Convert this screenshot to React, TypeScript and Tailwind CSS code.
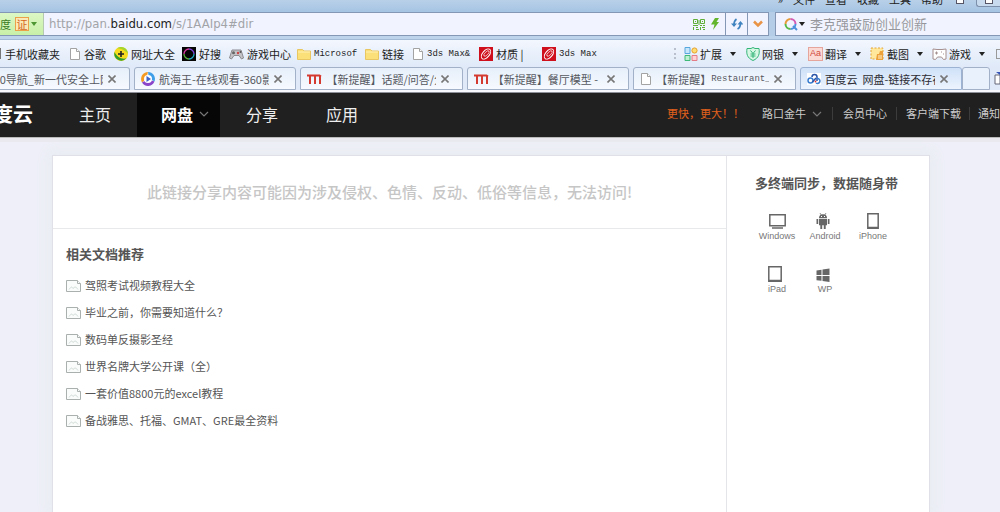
import React from "react";

const cjk = "font-['Noto_Sans_CJK_SC',sans-serif]";

function Caret({ className = "text-[#222]" }: { className?: string }) {
  return (
    <svg viewBox="0 0 6 4" className={`h-[4px] w-[6px] shrink-0 ${className}`} aria-hidden="true">
      <path d="M0 0h6L3 4z" fill="currentColor" />
    </svg>
  );
}

function Chevron({ className = "" }: { className?: string }) {
  return (
    <svg viewBox="0 0 10 6" className={`h-[6px] w-[10px] shrink-0 ${className}`} fill="none" stroke="#777" strokeWidth="1.200" aria-hidden="true">
      <path d="M1 1l4 4 4-4" />
    </svg>
  );
}

function PageIcon() {
  return (
    <svg viewBox="0 0 12 14" className="h-[14px] w-[12px] shrink-0" fill="#fff" stroke="#a3a3a3" aria-hidden="true">
      <path d="M1.5 1.500h6l3 3v8h-9z" />
      <path d="M7.500 1.500v3h3" />
    </svg>
  );
}

function FolderIcon() {
  return (
    <svg viewBox="0 0 14 14" className="size-[14px] shrink-0" aria-hidden="true">
      <path d="M.5 2.500h5l1.500 1.500h6.500v8.500H.5z" fill="#fbdf78" stroke="#e8c661" />
      <path d="M1 5h12" stroke="#fff1b5" />
    </svg>
  );
}

function PlusIcon() {
  return (
    <svg viewBox="0 0 14 14" className="size-[14px] shrink-0" aria-hidden="true">
      <circle cx="7" cy="7" r="7" fill="#f7dc1e" />
      <path d="M.5 5A7 7 0 0 0 12.500 11.300C8 12.800 3 10 .5 5z" fill="#2f9e2f" />
      <path d="M3 1.300A7 7 0 0 1 14 7C11 3 7 1.500 3 1.300z" fill="#a4d52c" />
      <path d="M7 4v6M4 7h6" stroke="#222" strokeWidth="1.600" />
    </svg>
  );
}

function RingIcon() {
  return (
    <svg viewBox="0 0 14 14" className="size-[14px] shrink-0" fill="none" strokeWidth="1.300" aria-hidden="true">
      <path fill="#050505" d="M0 0h14v14H0z" />
      <path d="M2 7a5 5 0 0 1 5-5" stroke="#d53a9d" />
      <path d="M7 2a5 5 0 0 1 5 5" stroke="#7c42d5" />
      <path d="M12 7a5 5 0 0 1-5 5" stroke="#20a9c2" />
      <path d="M7 12a5 5 0 0 1-5-5" stroke="#57b63b" />
    </svg>
  );
}

function PadIcon() {
  return (
    <svg viewBox="0 0 15 12" className="h-[12px] w-[15px] shrink-0" aria-hidden="true">
      <path d="M3 2h9l2.500 8-2 1-2.500-3.500H5L2.500 11l-2-1z" fill="#c3c3c7" stroke="#8b8b90" />
      <circle cx="4.500" cy="4.800" r="1.500" fill="#666" />
      <circle cx="9" cy="5" r="1.200" fill="#c44" />
      <circle cx="11.500" cy="4" r="1" fill="#555" />
    </svg>
  );
}

function RedIcon() {
  return (
    <svg viewBox="0 0 14 14" className="size-[14px] shrink-0" fill="none" stroke="#fff" aria-hidden="true">
      <path fill="#cf0f1c" stroke="none" d="M0 0h14v14H0z" />
      <ellipse cx="7" cy="7" rx="6" ry="3.400" transform="rotate(-50 7 7)" strokeWidth="1" />
      <ellipse cx="7.500" cy="6.500" rx="3.500" ry="1.500" transform="rotate(-45 7.500 6.500)" strokeWidth=".7" />
    </svg>
  );
}

function ExtIcon() {
  return (
    <svg viewBox="0 0 14 14" className="size-[14px] shrink-0" aria-hidden="true">
      <path d="M1 .5h5v6H1z" fill="#c7e6fb" stroke="#56a7dc" />
      <circle cx="10.500" cy="3.500" r="2.600" fill="#ffdd75" stroke="#e5a12c" />
      <path d="M1 8.500h5v5H1z" fill="#bdf0d0" stroke="#3fb978" />
      <path d="M8 8.500h5v5H8z" fill="#ffd1d4" stroke="#e37c86" />
    </svg>
  );
}

function ShieldIcon() {
  return (
    <svg viewBox="0 0 14 14" className="size-[14px] shrink-0" fill="none" stroke="#34b578" aria-hidden="true">
      <path d="M7 .5l2 1h4c.8 5 0 9.500-6 12C1 11 .2 6.500 1 1.500h4z" fill="#d6f7e4" />
      <path d="M4.500 3.500L7 6.500l2.500-3M7 6.500V11M4.500 7h5M4.500 9h5" />
    </svg>
  );
}

function TranslateIcon() {
  return (
    <span className="flex h-[14px] w-[15px] shrink-0 items-center justify-center border border-[#e5a59d] bg-[#fbd9d4] font-['Liberation_Sans',sans-serif] text-[9px] leading-none text-[#d04a3c]">
      Aa
    </span>
  );
}

function CropIcon() {
  return (
    <svg viewBox="0 0 15 14" className="h-[14px] w-[15px] shrink-0" aria-hidden="true">
      <path d="M1 1h12v11H1z" fill="#ffe79b" stroke="#e2a63a" strokeDasharray="2 1.500" />
      <path d="M6 13l1-6h2l1-3h3v9z" fill="#eda13b" />
      <path d="M9 8v4M11 8v4" stroke="#fff0c8" />
    </svg>
  );
}

function GameIcon() {
  return (
    <svg viewBox="0 0 15 14" className="h-[14px] w-[15px] shrink-0" fill="#fff" stroke="#a58f8f" aria-hidden="true">
      <path d="M1 2l4 .5h5l4-.5v10l-2.500.5-2-2.500h-4l-2 2.500L1 12z" />
      <path d="M3 6h3M4.500 4.500v3M9 5h1M11 7h1" />
    </svg>
  );
}

function PlayIcon() {
  return (
    <svg viewBox="0 0 14 14" className="size-[14px] shrink-0" aria-hidden="true">
      <path d="M7 0A7 7 0 0 0 1 10.500L5 7z" fill="#f59a22" />
      <path d="M7 0a7 7 0 0 1 6.500 9.500L8 6z" fill="#3e9ee8" />
      <path d="M1 10.500A7 7 0 0 0 13.500 9.500L7 7z" fill="#8b45ca" />
      <circle cx="7" cy="7" r="4" fill="#fff" />
      <path d="M5.500 4v6l4.500-3z" fill="#3e65c8" />
    </svg>
  );
}

function MIcon() {
  return (
    <svg viewBox="0 0 15 10" className="h-[10px] w-[15px] shrink-0" fill="none" stroke="#d43a30" strokeWidth="2" aria-hidden="true">
      <path d="M0 1.500h12.500l1.500 1M3 1v9M8 1v9M13 2v8" />
    </svg>
  );
}

function CloudIcon() {
  return (
    <svg viewBox="0 0 14 12" className="h-[12px] w-[14px] shrink-0" fill="none" strokeWidth="1.500" aria-hidden="true">
      <path fill="#fff" d="M0 0h14v12H0z" />
      <circle cx="3.500" cy="7.500" r="2.500" stroke="#3b7ed0" />
      <path d="M5.500 9L9 5" stroke="#2c56a8" />
      <path d="M5 4a2.500 2.500 0 0 1 5 0v4" stroke="#2c56a8" />
      <path d="M10 5.500a2.500 2.500 0 1 1-1 4.500" stroke="#3b7ed0" />
      <circle cx="8.500" cy="8.500" r=".9" fill="#d33" />
    </svg>
  );
}

function Mono({ children }: { children: React.ReactNode }) {
  return <span className="font-['Liberation_Mono',monospace] text-[9px] leading-[14px]">{children}</span>;
}

const bookmarks: { label: string; mono?: boolean; icon: React.ReactNode; width: string }[] = [
  { label: "谷歌", icon: <PageIcon />, width: "w-[45px]" },
  { label: "网址大全", icon: <PlusIcon />, width: "w-[68px]" },
  { label: "好搜", icon: <RingIcon />, width: "w-[47px]" },
  { label: "游戏中心", icon: <PadIcon />, width: "w-[68px]" },
  { label: "Microsof", mono: true, icon: <FolderIcon />, width: "w-[68px]" },
  { label: "链接", icon: <FolderIcon />, width: "w-[47px]" },
  { label: "3ds Max&", mono: true, icon: <PageIcon />, width: "w-[67px]" },
  { label: "材质 |", icon: <RedIcon />, width: "w-[63px]" },
  { label: "3ds Max", mono: true, icon: <RedIcon />, width: "w-[68px]" },
];

const tools = [
  { label: "扩展", icon: <ExtIcon /> },
  { label: "网银", icon: <ShieldIcon /> },
  { label: "翻译", icon: <TranslateIcon /> },
  { label: "截图", icon: <CropIcon /> },
  { label: "游戏", icon: <GameIcon /> },
];

function CloseX() {
  return (
    <button aria-label="关闭标签" className="ml-[5px] mr-[13px] shrink-0">
      <svg viewBox="0 0 8 8" className="size-[8px]" stroke="#777" strokeWidth="1.600" aria-hidden="true">
        <path d="M.5.5l7 7M7.500.5l-7 7" />
      </svg>
    </button>
  );
}

function Tab({ icon, children, active }: { icon: React.ReactNode; children: React.ReactNode; active?: boolean }) {
  return (
    <div
      className={`flex min-w-0 flex-1 items-center rounded-t-[3px] border pl-[6px] ${
        active
          ? "border-[#9db3d3] bg-linear-to-b from-[#cfe1f8] to-[#edf4fe] text-[#2d2d35]"
          : "border-[#a3b1c8] bg-linear-to-b from-[#e6effa] to-[#f7faff] text-[#55585f]"
      }`}
    >
      {icon}
      <a href="#tab" className="ml-1 flex min-w-0 flex-1 items-center overflow-hidden whitespace-pre">
        {children}
      </a>
      <CloseX />
    </div>
  );
}

function BrowserChrome() {
  return (
    <header className={`${cjk} text-[11px] leading-[14px] text-[#222]`}>
      <div className="flex h-3 justify-end overflow-hidden bg-linear-to-b from-[#b9d0e9] to-[#a5c4e3]">
        <nav className="-mt-2 flex gap-[10px] whitespace-nowrap pr-[13px]">
          <span>»</span>
          <a href="#file">文件</a>
          <a href="#view">查看</a>
          <a href="#fav">收藏</a>
          <a href="#tools">工具</a>
          <a href="#help">帮助</a>
        </nav>
        <span className="mr-3 h-1 w-2 border border-t-0 border-[#556] bg-white" />
        <span className="flex h-[7px] w-6 justify-center rounded-bl-[3px] border-b border-l border-[#7c8fab] bg-[#c8daee]">
          <span className="h-1 w-2 border border-t-0 border-[#556] bg-white" />
        </span>
      </div>

      <div className="flex h-6 bg-[#b6cde8]">
        <div className="flex min-w-0 flex-1 border-y border-r border-[#8498b5] bg-[#f1f4fe]">
          <button className="flex w-11 shrink-0 items-center border-r border-[#b4c9b0] bg-linear-to-b from-[#dcf7c4] to-[#c8f0a8] text-[#3b7d25]">
            <span>度</span>
            <span className="ml-1 flex size-[14px] items-center justify-center border border-[#eaa14a] bg-[#fce9b8] text-[#d2661c]">证</span>
            <Caret className="ml-[2px] text-[#4d9632]" />
          </button>
          <div
            role="textbox"
            aria-label="地址"
            contentEditable
            suppressContentEditableWarning
            className="flex-1 self-center whitespace-nowrap pl-[5px] font-['DejaVu_Sans_Condensed','Open_Sans',sans-serif] text-[13px] leading-[18px] text-[#a2a3a8]"
          >
            http://pan.<span className="text-[#222]">baidu.com</span>/s/1AAIp4#dir
          </div>
          <button aria-label="二维码" className="mr-[6px]">
            <svg viewBox="0 0 12 11" className="h-[11px] w-[12px]" fill="none" stroke="#5fae37" aria-hidden="true">
              <path d="M.5.5h4v4h-4zM7.500.5h4v4h-4zM2 2.500h1M9 2.500h1M0 6.500h5M7 6.500h2M10 6.500h2M.5 8v3M3 8.500h2M3 10.500h3M7.500 8v3M9 8.500h3M10 10.500h2M6 1v5" />
            </svg>
          </button>
          <button aria-label="极速模式" className="mr-[6px]">
            <svg viewBox="0 0 8 12" className="h-[12px] w-[8px]" fill="#63b52e" aria-hidden="true">
              <path d="M4 0h4L5.500 4H8L2 12l1.500-5.500H0z" />
            </svg>
          </button>
          <button aria-label="刷新" className="flex w-[22px] items-center justify-center border-l border-[#8498b5]">
            <svg viewBox="0 0 12 12" className="size-[12px]" fill="none" stroke="#3f83c0" strokeWidth="1.800" aria-hidden="true">
              <path d="M5.500 1C4 2 3 3 3 7M6.500 11c2-1 3-2 3-6" />
              <path d="M0 5.500h6L3 9zM6.500 6.500h6L9.500 3z" fill="#3f83c0" stroke="none" />
            </svg>
          </button>
          <button aria-label="展开" className="flex w-[21px] items-center justify-center border-l border-[#8498b5]">
            <svg viewBox="0 0 10 8" className="h-[8px] w-[10px]" fill="none" stroke="#e99346" strokeWidth="2.500" aria-hidden="true">
              <path d="M1 1.500l4 4 4-4" />
            </svg>
          </button>
        </div>
        <div className="ml-[6px] flex w-[225px] shrink-0 items-center border-y border-l border-[#8498b5] bg-[#f1f4fe] pl-2">
          <svg viewBox="0 0 14 14" className="size-[14px] shrink-0" fill="none" strokeWidth="2" aria-hidden="true">
            <path d="M1.500 7A5 5 0 0 1 6.500 2" stroke="#e59b3a" />
            <path d="M6.500 2a5 5 0 0 1 5 5" stroke="#d35ab5" />
            <path d="M11.500 7a5 5 0 0 1-5 5" stroke="#4d8fdc" />
            <path d="M6.500 12a5 5 0 0 1-5-5" stroke="#56b948" />
            <path d="M9 9l4 4" stroke="#4d8fdc" />
          </svg>
          <Caret className="ml-px mr-[5px]" />
          <input
            aria-label="搜索"
            placeholder="李克强鼓励创业创新"
            className="min-w-0 flex-1 bg-transparent text-[13px] leading-[18px] outline-none placeholder:text-[#96979c]"
          />
        </div>
      </div>

      <div className="h-1 border-b border-[#a3bad7] bg-[#bdd3eb]" />

      <div className="flex h-[27px] items-center overflow-hidden whitespace-nowrap bg-linear-to-b from-[#f3f7fe] to-[#dfe9f8]">
        <div className="flex w-[69px] shrink-0 items-center gap-1">
          <span className="h-[11px] w-px bg-[#777]" />
          <a href="#m">手机收藏夹</a>
        </div>
        {bookmarks.map((b, i) => (
          <a key={i} href="#bookmark" className={`flex shrink-0 items-center gap-[3px] ${b.width}`}>
            {b.icon}
            {b.mono ? <Mono>{b.label}</Mono> : b.label}
          </a>
        ))}
        <div className="ml-auto flex shrink-0 items-center">
          <span className="mr-2 h-[11px] border-l-2 border-dotted border-[#b9bfcc]" />
          {tools.map((t) => (
            <button key={t.label} className="flex w-[62px] items-center gap-[2px]">
              {t.icon}
              {t.label}
              <Caret className="ml-[6px]" />
            </button>
          ))}
          <span className="ml-[2px] h-[10px] w-1 border border-r-0 border-[#999]" />
        </div>
      </div>

      <div className="flex h-[23px] gap-1 bg-[#dfe9f8]">
        <div className="flex w-[130px] shrink-0 items-center rounded-tr-[3px] border border-l-0 border-[#a3b1c8] bg-linear-to-b from-[#e6effa] to-[#f7faff] text-[#55585f]">
          <a href="#tab" className="flex w-[103px] justify-end overflow-hidden whitespace-nowrap">
            <span className="-mr-2">360导航_新一代安全上网</span>
          </a>
          <CloseX />
        </div>
        <Tab icon={<PlayIcon />}>航海王-在线观看-360影视</Tab>
        <Tab icon={<MIcon />}>【新提醒】话题/问答/分</Tab>
        <Tab icon={<MIcon />}>【新提醒】餐厅模型 -</Tab>
        <Tab icon={<PageIcon />}>
          【新提醒】<Mono>Restaurant_</Mono>
        </Tab>
        <Tab icon={<CloudIcon />} active>
          {"百度云  网盘-链接不存在"}
        </Tab>
        <button aria-label="新标签" className="-ml-1 w-7 shrink-0 rounded-t-[3px] border border-[#a3b1c8] bg-[#e9f1fc]" />
        <svg viewBox="0 0 6 14" className="mt-1 h-[14px] w-[6px] shrink-0" aria-hidden="true">
          <path d="M1 4h5v9H1z" fill="#fff" stroke="#667" />
          <path d="M2 1h4v3z" fill="#3554b5" />
        </svg>
      </div>
      <div className="h-[3px] border-b border-[#8d9099] bg-[#f6f8fc]" />
    </header>
  );
}

function SiteNav() {
  return (
    <nav className={`${cjk} flex h-11 items-center whitespace-nowrap bg-[#202020] pb-[3px] text-[16px] text-[#eee]`}>
      <div className="flex w-[137px] shrink-0 items-center overflow-hidden">
        <a href="#home" className="flex w-[33px] shrink-0 justify-end overflow-hidden text-[20px] font-bold leading-[26px] text-white">
          百度云
        </a>
        <a href="#index" className="ml-[46px]">主页</a>
      </div>
      <a href="#disk" className="-mb-[3px] flex w-[83px] shrink-0 items-center self-stretch bg-[#060606] pb-[3px] pl-6 font-bold text-white">
        网盘
        <Chevron className="ml-[6px]" />
      </a>
      <a href="#share" className="ml-[26px]">分享</a>
      <a href="#app" className="ml-12">应用</a>
      <div className="ml-auto flex shrink-0 items-center text-[11px] text-[#ccc]">
        <a href="#faster" className="mr-[18px] text-[#e0601c]">更快，更大！！</a>
        <a href="#user" className="flex items-center">
          路口金牛
          <Chevron className="ml-[6px]" />
        </a>
        <span className="mx-[10px] h-[13px] w-px bg-[#3c3c3c]" />
        <a href="#vip">会员中心</a>
        <span className="mx-[9px] h-[13px] w-px bg-[#3c3c3c]" />
        <a href="#client">客户端下载</a>
        <span className="mx-2 h-[13px] w-px bg-[#3c3c3c]" />
        <a href="#notice">通知</a>
      </div>
    </nav>
  );
}

const docs = [
  "驾照考试视频教程大全",
  "毕业之前，你需要知道什么？",
  "数码单反摄影圣经",
  "世界名牌大学公开课（全）",
  "一套价值8800元的excel教程",
  "备战雅思、托福、GMAT、GRE最全资料",
];

function DocIcon() {
  return (
    <svg viewBox="0 0 15 12" className="h-[12px] w-[15px] shrink-0" fill="#fafcfb" stroke="#a9b0ad" aria-hidden="true">
      <path d="M.5.5h11l3 3v8H.5z" />
      <path d="M11.500.5v3h3" />
      <path d="M3 9.500c2-3 3-3 4-1 2-2 3-2 5 1" stroke="#cfdbd5" fill="none" />
    </svg>
  );
}

const devices = [
  {
    label: "Windows",
    icon: (
      <svg viewBox="0 0 17 16" className="h-[16px] w-[17px]" fill="none" stroke="#666" strokeWidth="1.500" aria-hidden="true">
        <path d="M.8 1.800h15.400v11H.8z" />
        <path d="M3 15h11" />
      </svg>
    ),
  },
  {
    label: "Android",
    icon: (
      <svg viewBox="0 0 14 16" className="mr-1 h-[16px] w-[14px]" fill="#666" aria-hidden="true">
        <path d="M3 5a4 3.800 0 0 1 8 0zM3 5.800h8v6.500H3zM.5 6h1.700v5H.5zM11.800 6h1.700v5h-1.700zM4.300 12h1.900v4H4.300zM7.800 12h1.900v4H7.800z" />
        <path d="M4 0l1.200 2M10 0L8.800 2" stroke="#666" strokeWidth=".7" />
        <path d="M5 3h1v1H5zM8 3h1v1H8z" fill="#fff" />
      </svg>
    ),
  },
  {
    label: "iPhone",
    icon: (
      <svg viewBox="0 0 12 16" className="h-[16px] w-[12px]" fill="none" stroke="#666" strokeWidth="1.500" aria-hidden="true">
        <path d="M.8.8h10.400v14.400H.8z" />
        <path d="M1 14.500h10" />
      </svg>
    ),
  },
  {
    label: "iPad",
    icon: (
      <svg viewBox="0 0 14 16" className="mr-1 h-[16px] w-[14px]" fill="none" stroke="#666" strokeWidth="1.500" aria-hidden="true">
        <path d="M.8.8h12.400v14.400H.8z" />
        <path d="M1 14.500h12" />
      </svg>
    ),
  },
  {
    label: "WP",
    icon: (
      <svg viewBox="0 0 14 16" className="mr-1 h-[16px] w-[14px]" fill="#666" aria-hidden="true">
        <path d="M.5 4.500l5-.8V9h-5zM6.500 3.500L13.500 2.500V9h-7zM.5 10h5v4.800l-5-.6zM6.500 10h7v6l-7-1z" />
      </svg>
    ),
  },
];

export default function App() {
  return (
    <div className="flex min-h-screen flex-col overflow-hidden bg-[#eeeff8]">
      <BrowserChrome />
      <SiteNav />
      <div className="h-[5px] shrink-0 border-t border-[#bbb] bg-[#e9e9ef]" />
      <main
        className={`${cjk} ml-[52px] mr-[70px] mt-[13px] flex flex-1 border border-b-0 border-[#e0e1e8] bg-white text-[#555] shadow-[0_0_12px_4px_#e9edf1]`}
      >
        <section className="min-w-0 flex-1 border-r border-[#e4e5e8]">
          <h1 className="flex h-[73px] items-center justify-center border-b border-[#e8e9eb] text-[15px] font-medium text-[#c6c6c6]">
            <span className="whitespace-nowrap">此链接分享内容可能因为涉及侵权、色情、反动、低俗等信息，无法访问!</span>
          </h1>
          <div className="px-[13px] pt-[15px]">
            <h2 className="text-[13px] font-bold leading-5">相关文档推荐</h2>
            <ul className="mt-2 text-[11px] leading-[27px]">
              {docs.map((d) => (
                <li key={d}>
                  <a href="#doc" className="flex items-center gap-1">
                    <DocIcon />
                    {d}
                  </a>
                </li>
              ))}
            </ul>
          </div>
        </section>
        <aside className="w-[202px] shrink-0 pl-[26px] pt-[17px]">
          <h2 className="whitespace-nowrap pl-[2px] text-[13px] font-bold leading-5">多终端同步，数据随身带</h2>
          <ul className="mt-5 grid grid-cols-[repeat(3,48px)] gap-y-6 font-['Liberation_Sans',sans-serif] text-[9px] leading-3 text-[#777]">
            {devices.map((d) => (
              <li key={d.label}>
                <a href="#device" className="flex flex-col items-center gap-px">
                  {d.icon}
                  {d.label}
                </a>
              </li>
            ))}
          </ul>
        </aside>
      </main>
    </div>
  );
}
